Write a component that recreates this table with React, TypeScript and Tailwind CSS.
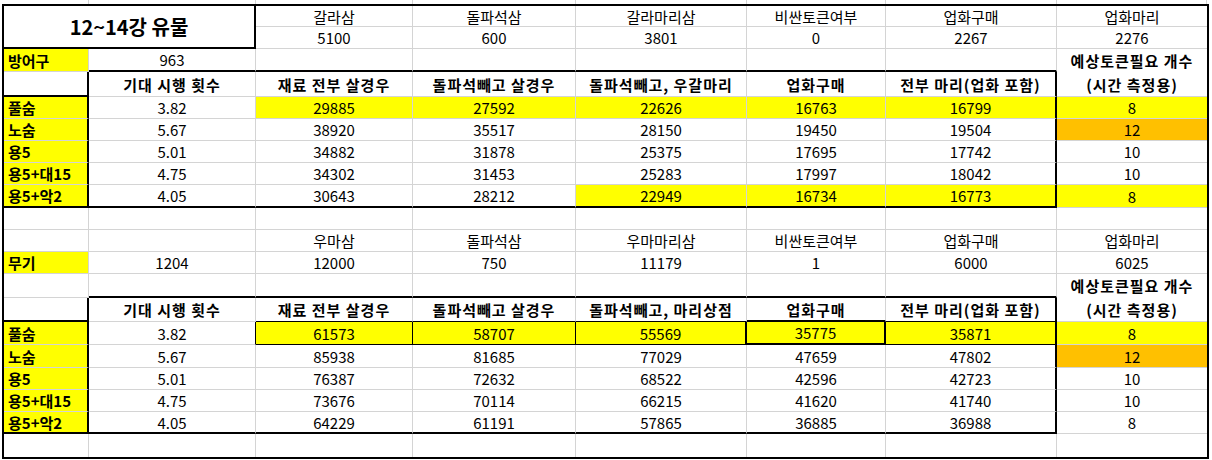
type S = 'g' | 'k' | 't' | 'n'

const R: Record<S, string> = {
  g: 'border-r border-r-[#d4d4d4]',
  k: 'border-r-2 border-r-black',
  t: 'border-r border-r-black',
  n: 'border-r-0',
}
const B: Record<S, string> = {
  g: 'border-b border-b-[#d4d4d4]',
  k: 'border-b-2 border-b-black',
  t: 'border-b border-b-black',
  n: 'border-b-0',
}
const FILL = ['', 'bg-[#ffff00]', 'bg-[#ffc000]']

type CellProps = {
  r?: S
  b?: S
  fill?: number
  bold?: boolean
  left?: boolean
  span?: string
  children?: React.ReactNode
}

function Cell({ r = 'g', b = 'g', fill = 0, bold = false, left = false, span = '', children }: CellProps) {
  return (
    <div
      className={`${R[r]} ${B[b]} ${FILL[fill]} ${span} flex items-center overflow-hidden whitespace-nowrap leading-none ${
        left ? 'justify-start pl-[4px]' : 'justify-center'
      } ${bold ? 'font-bold' : ''}`}
    >
      {children}
    </div>
  )
}

const top1 = {
  names: ['갈라삼', '돌파석삼', '갈라마리삼', '비싼토큰여부', '업화구매', '업화마리'],
  vals: ['5100', '600', '3801', '0', '2267', '2276'],
}
const top2 = {
  names: ['우마삼', '돌파석삼', '우마마리삼', '비싼토큰여부', '업화구매', '업화마리'],
  vals: ['1204', '12000', '750', '11179', '1', '6000', '6025'],
}

const heads1 = ['기대 시행 횟수', '재료 전부 살경우', '돌파석빼고 살경우', '돌파석빼고, 우갈마리', '업화구매', '전부 마리(업화 포함)']
const heads2 = ['기대 시행 횟수', '재료 전부 살경우', '돌파석빼고 살경우', '돌파석빼고, 마리상점', '업화구매', '전부 마리(업화 포함)']

const labels = ['풀숨', '노숨', '용5', '용5+대15', '용5+악2']

const data1 = [
  ['3.82', '29885', '27592', '22626', '16763', '16799', '8'],
  ['5.67', '38920', '35517', '28150', '19450', '19504', '12'],
  ['5.01', '34882', '31878', '25375', '17695', '17742', '10'],
  ['4.75', '34302', '31453', '25283', '17997', '18042', '10'],
  ['4.05', '30643', '28212', '22949', '16734', '16773', '8'],
]
const fills1 = [
  [0, 1, 1, 1, 1, 1, 1],
  [0, 0, 0, 0, 0, 0, 2],
  [0, 0, 0, 0, 0, 0, 0],
  [0, 0, 0, 0, 0, 0, 0],
  [0, 0, 0, 1, 1, 1, 1],
]
const data2 = [
  ['3.82', '61573', '58707', '55569', '35775', '35871', '8'],
  ['5.67', '85938', '81685', '77029', '47659', '47802', '12'],
  ['5.01', '76387', '72632', '68522', '42596', '42723', '10'],
  ['4.75', '73676', '70114', '66215', '41620', '41740', '10'],
  ['4.05', '64229', '61191', '57865', '36885', '36988', '8'],
]
const fills2 = [
  [0, 1, 1, 1, 1, 1, 1],
  [0, 0, 0, 0, 0, 0, 2],
  [0, 0, 0, 0, 0, 0, 0],
  [0, 0, 0, 0, 0, 0, 0],
  [0, 0, 0, 0, 0, 0, 0],
]

// border overrides for block 2 first data row (boxed cells), index = column B..H
const boxed: { r?: S; b?: S }[] = [
  { r: 't' },
  { r: 't', b: 't' },
  { r: 't', b: 't' },
  { r: 'k', b: 't' },
  { r: 'k', b: 'k' },
  { r: 'k', b: 't' },
  {},
]

function HeaderRow({ heads, second }: { heads: string[]; second?: boolean }) {
  return (
    <>
      <Cell r="k" b="k" />
      {heads.map((h, i) => {
        let b: S = 'g'
        if (second && i >= 1) b = i === 4 ? 'k' : 't'
        return (
          <Cell key={h + i} r={i === 5 ? 'k' : 'g'} b={b} bold>
            <span className="tracking-[1px]">{h}</span>
          </Cell>
        )
      })}
    </>
  )
}

function DataRows({ data, fills, second }: { data: string[][]; fills: number[][]; second?: boolean }) {
  return (
    <>
      {data.map((row, ri) => {
        const last = ri === data.length - 1
        return [
          <Cell key={`a${ri}`} r="k" b={last ? 'k' : 'g'} fill={1} bold left>
            {labels[ri]}
          </Cell>,
          ...row.map((v, ci) => {
            let r: S = ci === 5 ? 'k' : ci === 6 ? 'n' : 'g'
            let b: S = last && ci < 6 ? 'k' : 'g'
            if (second && ri === 0) {
              r = boxed[ci].r ?? r
              b = boxed[ci].b ?? b
            }
            return (
              <Cell key={`${ri}-${ci}`} r={r} b={b} fill={fills[ri][ci]}>
                {v}
              </Cell>
            )
          }),
        ]
      })}
    </>
  )
}

function TokenHead() {
  return (
    <Cell r="n" span="row-span-2" bold>
      <div className="flex flex-col items-center leading-[24px] tracking-[1px]">
        <span>예상토큰필요 개수</span>
        <span>(시간 측정용)</span>
      </div>
    </Cell>
  )
}

function Empty({ n, b = 'g' }: { n: number; b?: S }) {
  return (
    <>
      {Array.from({ length: n }).map((_, i) => (
        <Cell key={i} b={b} />
      ))}
    </>
  )
}

export default function App() {
  const strip = [89, 167, 157, 163, 171, 139, 171, 150]
  return (
    <div className="w-[1212px] h-[460px] overflow-hidden bg-white text-[15px] text-black font-['Noto_Sans_CJK_KR',sans-serif]">
      <div className="flex h-[4px]">
        {strip.map((w, i) => (
          <div key={i} className="border-r border-r-[#d4d4d4] shrink-0" style={{ width: w }} />
        ))}
      </div>
      <div className="ml-[2px] w-[1207px] border-2 border-black grid grid-cols-[85px_167px_157px_163px_171px_139px_171px_150px] grid-rows-[21px_22px_23px_25px_22px_22px_22px_22px_23px_22px_22px_22px_24px_24px_23px_23px_22px_22px_22px_23px]">
        {/* block 1 */}
        <Cell r="k" b="k" span="col-span-2 row-span-2" bold>
          <span className="text-[20px]">12~14강 유물</span>
        </Cell>
        {top1.names.map((n, i) => (
          <Cell key={n + i} r={i === 5 ? 'n' : 'g'}>
            {n}
          </Cell>
        ))}
        {top1.vals.map((v, i) => (
          <Cell key={'v' + i} r={i === 5 ? 'n' : 'g'}>
            {v}
          </Cell>
        ))}
        <Cell fill={1} bold left>
          방어구
        </Cell>
        <Cell b="k">963</Cell>
        <Empty n={5} b="k" />
        <TokenHead />
        <HeaderRow heads={heads1} />
        <DataRows data={data1} fills={fills1} />

        {/* spacer */}
        <Empty n={7} />
        <Cell r="n" />

        {/* block 2 */}
        <Cell />
        <Cell />
        {top2.names.map((n, i) => (
          <Cell key={n + i} r={i === 5 ? 'n' : 'g'}>
            {n}
          </Cell>
        ))}
        <Cell fill={1} bold left>
          무기
        </Cell>
        {top2.vals.map((v, i) => (
          <Cell key={'w' + i} r={i === 6 ? 'n' : 'g'}>
            {v}
          </Cell>
        ))}
        <Cell />
        <Empty n={6} b="k" />
        <TokenHead />
        <HeaderRow heads={heads2} second />
        <DataRows data={data2} fills={fills2} second />

        {/* bottom row */}
        {Array.from({ length: 7 }).map((_, i) => (
          <Cell key={'z' + i} b="n" />
        ))}
        <Cell r="n" b="n" />
      </div>
    </div>
  )
}
